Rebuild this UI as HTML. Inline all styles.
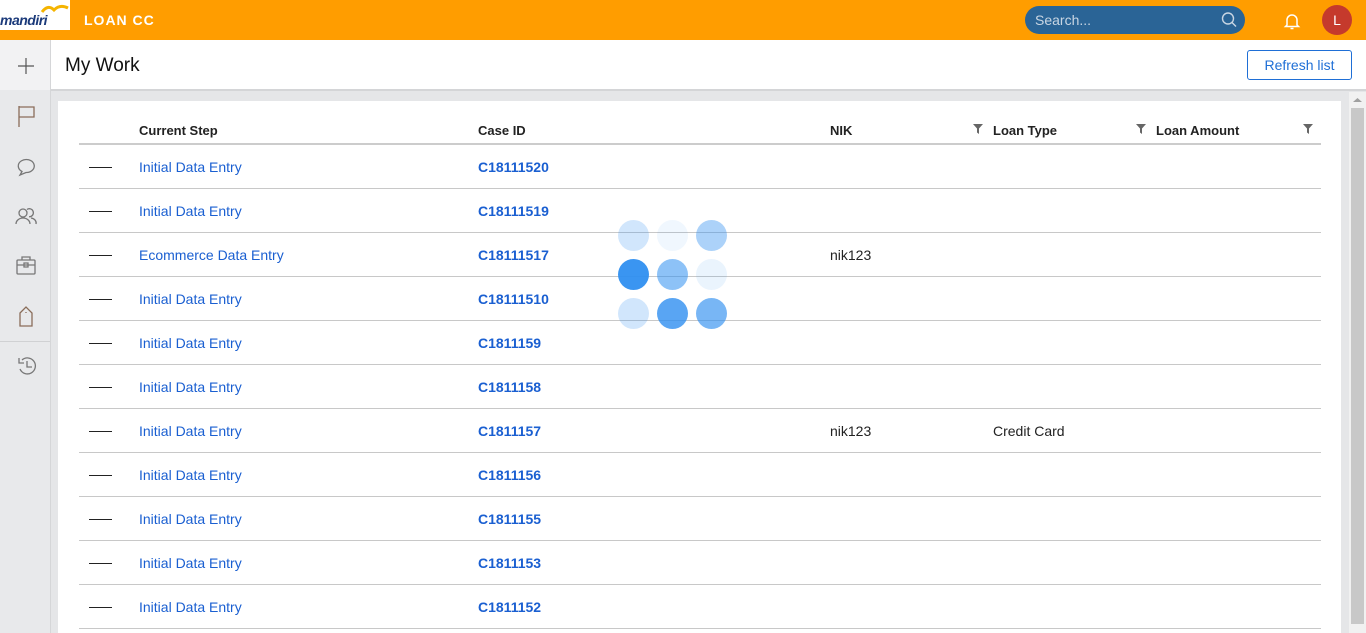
<!DOCTYPE html>
<html><head><style>
*{margin:0;padding:0;box-sizing:border-box}
body{width:1366px;height:633px;overflow:hidden;font-family:"Liberation Sans",sans-serif;background:#e5e6e8;position:relative}
.top{position:absolute;left:0;top:0;width:1366px;height:40px;background:#ff9d00}
.logo{position:absolute;left:0;top:0;width:70px;height:30px;background:#fff}
.logo span{position:absolute;left:0;top:12px;font-size:14px;font-weight:bold;font-style:italic;color:#1b3a7a;letter-spacing:-0.5px}
.app{position:absolute;left:84px;top:12px;color:#fff;font-weight:bold;font-size:14px;letter-spacing:1px}
.search{position:absolute;left:1025px;top:6px;width:220px;height:28px;border-radius:14px;background:#2a6496;color:#c9d6e3;font-size:14px;padding:6px 10px}
.av{position:absolute;left:1322px;top:5px;width:30px;height:30px;border-radius:50%;background:#c53a2c;color:#fff;font-size:14px;text-align:center;line-height:30px}
.side{position:absolute;left:0;top:40px;width:51px;height:593px;background:#e8e9eb;border-right:1px solid #d5d6d8}
.plus{position:absolute;left:0;top:40px;width:50px;height:50px;background:#f2f2f3}
.title{position:absolute;left:51px;top:40px;width:1315px;height:51px;background:#fff;border-bottom:2px solid #d4d5d7}
.title h1{position:absolute;left:14px;top:15px;font-weight:normal;font-size:19px;color:#111}
.btn{position:absolute;left:1247px;top:50px;width:105px;height:30px;border:1px solid #1f6fd6;border-radius:3px;color:#1f6fd6;font-size:14px;text-align:center;line-height:28px;background:#fff}
.card{position:absolute;left:58px;top:101px;width:1283px;height:532px;background:#fff}
.sb{position:absolute;left:1349px;top:92px;width:17px;height:541px;background:#f1f1f1}
.sb i{position:absolute;left:2px;top:16px;width:13px;height:516px;background:#c8c8c8}
.th{position:absolute;top:123px;font-size:13px;font-weight:bold;color:#222}
.hl{position:absolute;left:79px;top:143px;width:1242px;height:2px;background:#ccc}
.row{position:absolute;left:79px;width:1242px;height:44px;border-bottom:1px solid #c8c8c8;font-size:14px}
.row .d{position:absolute;left:10px;top:22px;width:23px;height:1px;background:#222}
.row .s{position:absolute;left:60px;top:14px;color:#1a5fd1}
.row .c{position:absolute;left:399px;top:14px;color:#1a5fd1;font-weight:bold}
.row .n{position:absolute;left:751px;top:14px;color:#222}
.row .l{position:absolute;left:914px;top:14px;color:#222}
.dot{position:absolute;width:31px;height:31px;border-radius:50%;background:#2f8ff0}
svg{position:absolute}
</style></head><body>
<div class="top"></div>
<div class="logo"><span>mandiri</span><svg style="left:40px;top:4px" width="30" height="10"><path d="M2 8 Q8 0 14 6 Q20 0 28 4" stroke="#f5b400" stroke-width="3" fill="none"/></svg></div>
<div class="app">LOAN CC</div>
<div class="search">Search...</div>
<svg style="left:1220px;top:11px" width="18" height="18"><circle cx="8" cy="7.5" r="5.5" stroke="#c9d6e3" stroke-width="1.4" fill="none"/><path d="M12 11.5l4 4" stroke="#c9d6e3" stroke-width="1.4"/></svg>
<svg style="left:1283px;top:11px" width="18" height="20"><path d="M4 14V9a5 5 0 0110 0v5l1.5 1.5h-13z" stroke="#fff" stroke-width="1.5" fill="none"/><path d="M7.5 17.5h3" stroke="#fff" stroke-width="1.5"/></svg>
<div class="av">L</div>
<div class="side"></div>
<div class="plus"></div>
<svg style="left:17px;top:57px" width="18" height="18"><path d="M9 1v16M1 9h16" stroke="#555" stroke-width="1.2"/></svg>
<div style="position:absolute;left:0;top:341px;width:50px;height:1px;background:#d0d1d3"></div>
<svg style="left:16px;top:105px" width="22" height="22" fill="none" stroke="#777" stroke-width="1.3"><path d="M3 1v21M3 2h15v10H3" stroke="#8a6d5a"/></svg>
<svg style="left:16px;top:155px" width="22" height="22" fill="none" stroke="#777" stroke-width="1.3"><path d="M6 16.5A8 6.5 0 1 1 10 17.5L4 20z"/></svg>
<svg style="left:15px;top:205px" width="24" height="22" fill="none" stroke="#777" stroke-width="1.3"><circle cx="8" cy="8" r="4"/><path d="M1 19a7 6 0 0 1 14 0"/><path d="M12 4.5a4 4 0 1 1 2 7.2M16 13a6 5 0 0 1 5 6"/></svg>
<svg style="left:15px;top:255px" width="24" height="22" fill="none" stroke="#777" stroke-width="1.3"><rect x="2" y="5" width="18" height="14" rx="1"/><path d="M7 5V2h8v3M2 10h18M9 8h4v4H9z"/></svg>
<svg style="left:16px;top:305px" width="22" height="22" fill="none" stroke="#8a6d5a" stroke-width="1.3"><path d="M4 8l6-6 6 6v13H4zM10 7v1"/></svg>
<svg style="left:15px;top:355px" width="24" height="22" fill="none" stroke="#777" stroke-width="1.3"><path d="M5 14a8 8 0 1 0 2-9M4 3v5h5M12 6v6h5"/></svg>
<div class="title"><h1>My Work</h1></div>
<div class="btn">Refresh list</div>
<div class="card"></div>
<div class="sb"><i></i></div>
<svg style="left:1352px;top:96px" width="11" height="8"><path d="M1 6l4.5-4 4.5 4z" fill="#a0a0a0"/></svg>
<div class="th" style="left:139px">Current Step</div>
<div class="th" style="left:478px">Case ID</div>
<div class="th" style="left:830px">NIK</div>
<div class="th" style="left:993px">Loan Type</div>
<div class="th" style="left:1156px">Loan Amount</div>
<svg style="left:973px;top:124px" width="10" height="10"><path d="M0 0h10L6 4.5V10L4 8.5V4.5z" fill="#666"/></svg>
<svg style="left:1136px;top:124px" width="10" height="10"><path d="M0 0h10L6 4.5V10L4 8.5V4.5z" fill="#666"/></svg>
<svg style="left:1303px;top:124px" width="10" height="10"><path d="M0 0h10L6 4.5V10L4 8.5V4.5z" fill="#666"/></svg>
<div class="hl"></div>
<div class="row" style="top:145px"><i class="d"></i><span class="s">Initial Data Entry</span><span class="c">C18111520</span></div>
<div class="row" style="top:189px"><i class="d"></i><span class="s">Initial Data Entry</span><span class="c">C18111519</span></div>
<div class="row" style="top:233px"><i class="d"></i><span class="s">Ecommerce Data Entry</span><span class="c">C18111517</span><span class="n">nik123</span></div>
<div class="row" style="top:277px"><i class="d"></i><span class="s">Initial Data Entry</span><span class="c">C18111510</span></div>
<div class="row" style="top:321px"><i class="d"></i><span class="s">Initial Data Entry</span><span class="c">C1811159</span></div>
<div class="row" style="top:365px"><i class="d"></i><span class="s">Initial Data Entry</span><span class="c">C1811158</span></div>
<div class="row" style="top:409px"><i class="d"></i><span class="s">Initial Data Entry</span><span class="c">C1811157</span><span class="n">nik123</span><span class="l">Credit Card</span></div>
<div class="row" style="top:453px"><i class="d"></i><span class="s">Initial Data Entry</span><span class="c">C1811156</span></div>
<div class="row" style="top:497px"><i class="d"></i><span class="s">Initial Data Entry</span><span class="c">C1811155</span></div>
<div class="row" style="top:541px"><i class="d"></i><span class="s">Initial Data Entry</span><span class="c">C1811153</span></div>
<div class="row" style="top:585px"><i class="d"></i><span class="s">Initial Data Entry</span><span class="c">C1811152</span></div>
<div class="dot" style="left:618px;top:220px;opacity:.22"></div>
<div class="dot" style="left:657px;top:220px;opacity:.07"></div>
<div class="dot" style="left:696px;top:220px;opacity:.4"></div>
<div class="dot" style="left:618px;top:259px;opacity:.95"></div>
<div class="dot" style="left:657px;top:259px;opacity:.55"></div>
<div class="dot" style="left:696px;top:259px;opacity:.1"></div>
<div class="dot" style="left:618px;top:298px;opacity:.22"></div>
<div class="dot" style="left:657px;top:298px;opacity:.8"></div>
<div class="dot" style="left:696px;top:298px;opacity:.65"></div>
</body></html>
